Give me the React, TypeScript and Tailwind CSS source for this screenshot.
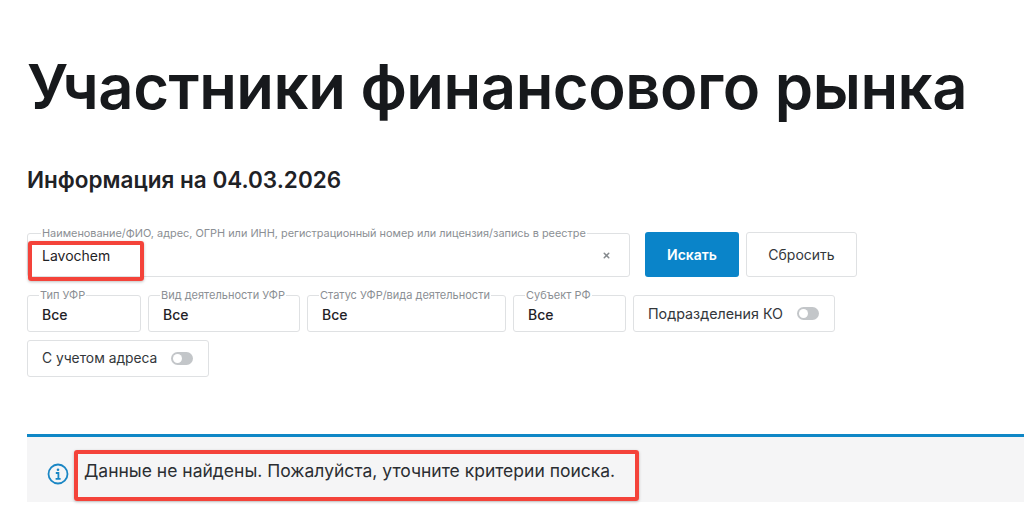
import { X } from "lucide-react";

const font = { fontFamily: "Inter, 'Noto Sans', sans-serif" };

const Field = ({ label, width, value }: { label: string; width: string; value: string }) => (
  <div className={`relative h-[37px] rounded-[3px] border border-[#dfe1e3] pl-[14px] ${width}`}>
    <span className="absolute -top-[7px] left-[11px] bg-white px-[1px] text-[11px] leading-[13px] text-[#8b8f94] whitespace-nowrap">
      {label}
    </span>
    <span className="block pt-[10px] text-[14px] leading-[17px] font-medium text-[#1f2226]">{value}</span>
  </div>
);

const Toggle = ({ label, width, textSize }: { label: string; width: string; textSize: string }) => (
  <div className={`flex h-[37px] items-center justify-between rounded-[3px] border border-[#dfe1e3] pl-[14px] pr-[15px] ${width}`}>
    <span className={`text-[#33373b] whitespace-nowrap ${textSize}`}>{label}</span>
    <span className="flex h-[13px] w-[22px] items-center rounded-full bg-[#c3c6c9] pl-[2px]">
      <span className="h-[9px] w-[9px] rounded-full bg-white" />
    </span>
  </div>
);

export default function App() {
  return (
    <div className="relative h-[531px] w-[1024px] overflow-hidden bg-white" style={font}>
      <div className="pl-[27px] pt-[49px]">
        <h1 className="text-[61.5px] leading-[76px] font-semibold tracking-[-0.45px] text-[#17191c] whitespace-nowrap">
          Участники финансового рынка
        </h1>
        <h2 className="mt-[42px] text-[22.5px] leading-[26px] font-semibold text-[#1f2226]">Информация на 04.03.2026</h2>

        <div className="mt-[39px] flex items-end">
          <div className="relative h-[44px] w-[603px] rounded-[3px] border border-[#dfe1e3] pl-[14px]">
            <span className="absolute -top-[7px] left-[13px] bg-white px-[1px] text-[10.9px] leading-[13px] text-[#8b8f94] whitespace-nowrap">
              Наименование/ФИО, адрес, ОГРН или ИНН, регистрационный номер или лицензия/запись в реестре
            </span>
            <span className="block pt-[13px] text-[14px] leading-[17px] text-[#1f2226]">Lavochem</span>
            <X className="absolute right-[18px] top-[17px] h-[9px] w-[9px] text-[#85898d]" strokeWidth={4} />
          </div>
          <button className="ml-[15px] h-[45px] w-[94px] rounded-[3px] bg-[#0a84c9] text-[14px] font-semibold text-white">
            Искать
          </button>
          <button className="ml-[7px] h-[45px] w-[111px] rounded-[3px] border border-[#dfe1e3] text-[14px] text-[#33373b]">
            Сбросить
          </button>
        </div>

        <div className="mt-[18px] flex w-[820px] flex-wrap gap-x-[7px] gap-y-[8px]">
          <Field label="Тип УФР" width="w-[114px]" value="Все" />
          <Field label="Вид деятельности УФР" width="w-[152px]" value="Все" />
          <Field label="Статус УФР/вида деятельности" width="w-[199px]" value="Все" />
          <Field label="Субъект РФ" width="w-[113px]" value="Все" />
          <Toggle label="Подразделения КО" width="w-[202px]" textSize="text-[14.3px]" />
          <Toggle label="С учетом адреса" width="w-[182px]" textSize="text-[13.8px]" />
        </div>

        <div className="mt-[57px] flex h-[68px] items-center border-t-[3px] border-[#0f87c6] bg-[#f5f5f6] pt-[8px] pl-[20px]">
          <svg viewBox="0 0 22 22" className="h-[22px] w-[22px] text-[#1a86c4]" fill="none" stroke="currentColor">
            <circle cx="11" cy="11" r="9.5" strokeWidth="1.8" />
            <circle cx="11" cy="6.8" r="1.3" fill="currentColor" stroke="none" />
            <path d="M8.8 10h2.6v5.6M8.6 15.8h5" strokeWidth="1.8" />
          </svg>
          <p className="ml-[15px] -mt-[4px] text-[17.5px] text-[#2b2e32] whitespace-nowrap">
            Данные не найдены. Пожалуйста, уточните критерии поиска.
          </p>
        </div>
      </div>

      {/* red annotation frames drawn over the screenshot */}
      <div className="absolute left-[28px] top-[241px] h-[40px] w-[116px] rounded-[3px] border-[4px] border-[#f4433a] shadow-[0_1px_3px_rgba(0,0,0,0.25)]" />
      <div className="absolute left-[74px] top-[450px] h-[51px] w-[565px] rounded-[3px] border-[4px] border-[#f4433a] shadow-[0_1px_3px_rgba(0,0,0,0.25)]" />
    </div>
  );
}
